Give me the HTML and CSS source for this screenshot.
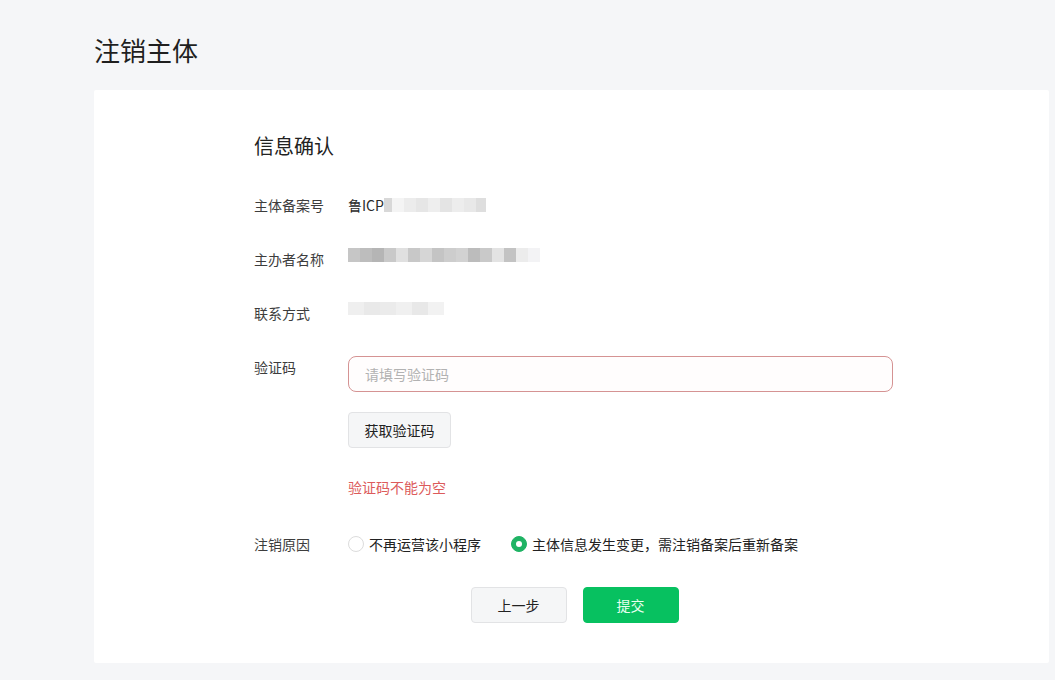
FILE: index.html
```html
<!DOCTYPE html>
<html lang="zh-CN">

<head>
    <meta charset="UTF-8">
    <meta name="viewport" content="width=device-width, initial-scale=1.0">
    <title>注销主体</title>
    <link rel="stylesheet" href="styles.css">
</head>

<body>
    <div class="page">
        <h1 class="page_title">注销主体</h1>

        <div class="card">
            <div class="form">
                <h2 class="form_title">信息确认</h2>

                <div class="row">
                    <span class="label">主体备案号</span>
                    <div class="value">
                        鲁ICP<span class="mosaic">
                            <i style="width:8px;background:#d8d8d8"></i><i style="width:12px;background:#f4f4f4"></i><i style="width:12px;background:#ececec"></i><i style="width:12px;background:#e6e6e6"></i><i style="width:12px;background:#eeeeee"></i><i style="width:12px;background:#e4e4e4"></i><i style="width:12px;background:#ededed"></i><i style="width:12px;background:#e8e8e8"></i><i style="width:10px;background:#dedede"></i>
                        </span>
                    </div>
                </div>

                <div class="row">
                    <span class="label">主办者名称</span>
                    <div class="value">
                        <span class="mosaic">
                            <i style="width:12px;background:#c6c6c6"></i><i style="width:12px;background:#bdbdbd"></i><i style="width:12px;background:#b5b5b5"></i><i style="width:12px;background:#c9c9c9"></i><i style="width:12px;background:#e0e0e0"></i><i style="width:12px;background:#c8c8c8"></i><i style="width:12px;background:#d6d6d6"></i><i style="width:12px;background:#c4c4c4"></i><i style="width:12px;background:#cdcdcd"></i><i style="width:12px;background:#d2d2d2"></i><i style="width:12px;background:#bcbcbc"></i><i style="width:12px;background:#c9c9c9"></i><i style="width:12px;background:#e3e3e3"></i><i style="width:12px;background:#c3c3c3"></i><i style="width:12px;background:#ececec"></i><i style="width:12px;background:#f3f3f5"></i>
                        </span>
                    </div>
                </div>

                <div class="row">
                    <span class="label">联系方式</span>
                    <div class="value">
                        <span class="mosaic thin">
                            <i style="width:16px;background:#efefef"></i><i style="width:16px;background:#e9e9e9"></i><i style="width:16px;background:#ebebeb"></i><i style="width:16px;background:#f0f0f0"></i><i style="width:16px;background:#e8e8e8"></i><i style="width:16px;background:#f2f2f2"></i>
                        </span>
                    </div>
                </div>

                <div class="row row_code">
                    <span class="label">验证码</span>
                    <div class="value column">
                        <input class="code_input" type="text" placeholder="请填写验证码">
                        <button class="btn btn_default btn_code">获取验证码</button>
                        <p class="error">验证码不能为空</p>
                    </div>
                </div>

                <div class="row">
                    <span class="label">注销原因</span>
                    <div class="value radios">
                        <label class="radio"><span class="dot"></span>不再运营该小程序</label>
                        <label class="radio checked"><span class="dot"></span>主体信息发生变更，需注销备案后重新备案</label>
                    </div>
                </div>
            </div>

            <div class="actions">
                <button class="btn btn_default">上一步</button>
                <button class="btn btn_primary">提交</button>
            </div>
        </div>
    </div>
</body>

</html>
```

FILE: styles.css
```css
* {
    box-sizing: border-box;
}

body {
    margin: 0;
    background-color: #f5f6f8;
    font-family: "Microsoft YaHei", "Noto Sans CJK SC", "Liberation Sans", sans-serif;
    color: #353535;
}

.page {
    padding: 0 6px 17px 94px;
}

.page_title {
    margin: 33px 0 0 0;
    font-size: 26px;
    line-height: 34px;
    font-weight: normal;
    color: #1f1f1f;
}

.card {
    margin-top: 23px;
    background-color: #fff;
    border-radius: 2px;
    padding: 42px 0 40px 160px;
}

.form_title {
    margin: 0 0 34px 0;
    font-size: 20px;
    line-height: 28px;
    font-weight: normal;
    color: #222;
}

.row {
    display: flex;
    align-items: flex-start;
    margin-bottom: 32px;
    font-size: 14px;
    line-height: 22px;
}

.row_code {
    margin-bottom: 35px;
}

.label {
    width: 94px;
    flex-shrink: 0;
    color: #3d3d3d;
}

.value {
    display: flex;
    align-items: center;
    color: #2a2a2a;
}

.value.column {
    flex-direction: column;
    align-items: flex-start;
}

.mosaic {
    display: inline-flex;
    height: 14px;
}

.mosaic i {
    display: block;
    height: 100%;
}

.mosaic.thin {
    height: 13px;
}

.code_input {
    width: 545px;
    height: 36px;
    border: 1px solid #d59393;
    border-radius: 8px;
    background-color: #fffdfd;
    padding: 0 16px;
    font-family: inherit;
    font-size: 14px;
    outline: none;
}

.code_input::placeholder {
    color: #b2b2b2;
}

.btn {
    height: 36px;
    border-radius: 4px;
    font-family: inherit;
    font-size: 14px;
    cursor: pointer;
}

.btn_default {
    background-color: #f5f6f7;
    border: 1px solid #e2e3e5;
    color: #222;
}

.btn_code {
    margin-top: 20px;
    width: 103px;
}

.error {
    margin: 28px 0 0 0;
    color: #dc5b5b;
    font-size: 14px;
    line-height: 22px;
}

.radios {
    gap: 30px;
}

.radio {
    display: flex;
    align-items: center;
    gap: 5px;
    color: #222;
}

.dot {
    width: 16px;
    height: 16px;
    border-radius: 50%;
    border: 1px solid #dcdcdc;
    background-color: #fff;
    position: relative;
}

.radio.checked .dot {
    border-color: #1fb364;
    background-color: #1fb364;
}

.radio.checked .dot::after {
    content: "";
    position: absolute;
    left: 4px;
    top: 4px;
    width: 6px;
    height: 6px;
    border-radius: 50%;
    background-color: #fff;
}

.actions {
    display: flex;
    justify-content: center;
    gap: 16px;
    margin-left: -160px;
    padding-left: 6px;
}

.actions .btn {
    width: 96px;
}

.btn_primary {
    background-color: #07c160;
    border: 1px solid #07c160;
    color: #e8fff0;
}
```
